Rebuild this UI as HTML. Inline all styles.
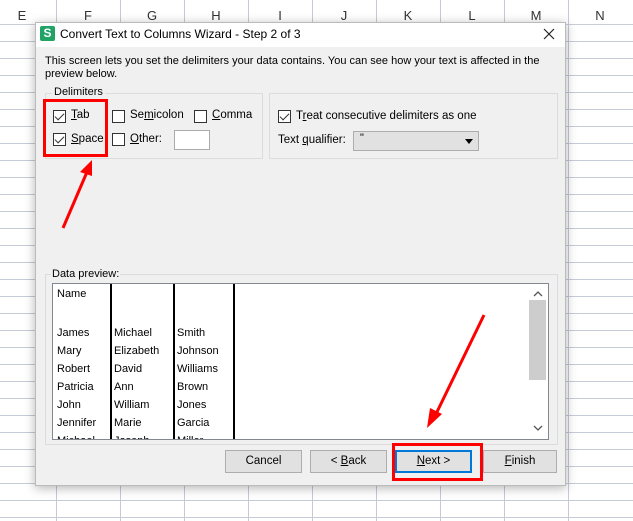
<!DOCTYPE html>
<html><head><style>
*{margin:0;padding:0;box-sizing:border-box}
body{width:633px;height:521px;overflow:hidden;position:relative;background:#fff;font-family:"Liberation Sans","DejaVu Sans",sans-serif;font-size:11.5px;color:#000}
.a{position:absolute}
.cb{position:absolute;width:13px;height:13px;border:1px solid #333;background:#fff}
.cb.on::after{content:"";position:absolute;left:3px;top:0px;width:4px;height:8px;border-right:1.5px solid #333;border-bottom:1.5px solid #333;transform:rotate(45deg)}
.btn{position:absolute;height:23px;background:#e1e1e1;border:1px solid #adadad;text-align:center;line-height:21px}
u{text-decoration:underline}
.grp{position:absolute;border:1px solid #dcdcdc}
.d{position:absolute;font-size:11px}
</style></head><body>
<svg class="a" style="left:0;top:0" width="633" height="521">
<rect x="0" y="0" width="633" height="24" fill="#fff"/>
<g stroke="#c8cdd8" stroke-width="1">
<line x1="0" y1="24.5" x2="633" y2="24.5"/>
</g>
<g stroke="#c6cbd8">
<line x1="56.5" y1="0" x2="56.5" y2="521"/><line x1="120.5" y1="0" x2="120.5" y2="521"/><line x1="184.5" y1="0" x2="184.5" y2="521"/><line x1="248.5" y1="0" x2="248.5" y2="521"/><line x1="312.5" y1="0" x2="312.5" y2="521"/><line x1="376.5" y1="0" x2="376.5" y2="521"/><line x1="440.5" y1="0" x2="440.5" y2="521"/><line x1="504.5" y1="0" x2="504.5" y2="521"/><line x1="568.5" y1="0" x2="568.5" y2="521"/>
</g>
<g stroke="#c6cbd8" id="rows"></g>
<g font-size="13" fill="#333" text-anchor="middle" font-family="Liberation Sans">
<text x="22" y="20">E</text><text x="88" y="20">F</text><text x="152" y="20">G</text><text x="216" y="20">H</text><text x="280" y="20">I</text><text x="344" y="20">J</text><text x="408" y="20">K</text><text x="472" y="20">L</text><text x="536" y="20">M</text><text x="600" y="20">N</text>
</g>
</svg>
<script>
var g=document.getElementById('rows'),s='';for(var y=41;y<521;y+=17)s+='<line x1="0" y1="'+(y+.5)+'" x2="633" y2="'+(y+.5)+'"/>';g.innerHTML=s;
</script>
<div class="a" style="left:35px;top:22px;width:531px;height:464px;background:#f0f0f0;border:1px solid #bbb;box-shadow:0 2px 10px rgba(0,0,0,.3)"></div>
<div class="a" style="left:36px;top:23px;width:529px;height:24px;background:#fff"></div>
<div class="a" style="left:40px;top:26px;width:15px;height:15px;background:#21a366;border-radius:2px;color:#fff;font-size:12px;font-weight:bold;text-align:center;line-height:15px">S</div>
<div class="a" style="left:60px;top:27px;font-size:12px">Convert Text to Columns Wizard - Step 2 of 3</div>
<svg class="a" style="left:543px;top:28px" width="12" height="12"><path d="M1 1L11 11M11 1L1 11" stroke="#222" stroke-width="1.2"/></svg>
<div class="a" style="left:45px;top:55px;width:510px;line-height:13px;font-size:11px">This screen lets you set the delimiters your data contains. You can see how your text is affected in the preview below.</div>
<div class="grp" style="left:45px;top:93px;width:218px;height:66px"></div>
<div class="a" style="left:52px;top:86px;padding:0 2px;background:#f0f0f0;font-size:11px">Delimiters</div>
<div class="cb on" style="left:53px;top:110px"></div><div class="a" style="left:71px;top:109px"><u>T</u>ab</div>
<div class="cb on" style="left:53px;top:133px"></div><div class="a" style="left:71px;top:133px"><u>S</u>pace</div>
<div class="cb" style="left:112px;top:110px"></div><div class="a" style="left:130px;top:109px">Se<u>m</u>icolon</div>
<div class="cb" style="left:194px;top:110px"></div><div class="a" style="left:212px;top:109px"><u>C</u>omma</div>
<div class="cb" style="left:112px;top:133px"></div><div class="a" style="left:130px;top:133px"><u>O</u>ther:</div>
<div class="a" style="left:174px;top:130px;width:36px;height:20px;background:#fff;border:1px solid #aaa"></div>
<div class="grp" style="left:269px;top:93px;width:289px;height:66px"></div>
<div class="cb on" style="left:278px;top:110px"></div><div class="a" style="left:296px;top:110px">T<u>r</u>eat consecutive delimiters as one</div>
<div class="a" style="left:278px;top:134px">Text <u>q</u>ualifier:</div>
<div class="a" style="left:353px;top:131px;width:126px;height:20px;background:#e1e1e1;border:1px solid #adadad;padding-left:6px;font-size:11px">"</div>
<div class="a" style="left:465px;top:139px;width:0;height:0;border-left:4px solid transparent;border-right:4px solid transparent;border-top:5px solid #000"></div>
<div class="grp" style="left:45px;top:274px;width:513px;height:171px"></div>
<div class="a" style="left:51px;top:268px;padding:0 1px;background:#f0f0f0;font-size:11px">Data preview:</div>
<div class="a" style="left:52px;top:283px;width:497px;height:157px;background:#fff;border:1px solid #828790;overflow:hidden">
<div class="a" style="left:57px;top:0;width:1.5px;height:160px;background:#000"></div>
<div class="a" style="left:120px;top:0;width:1.5px;height:160px;background:#000"></div>
<div class="a" style="left:180px;top:0;width:1.5px;height:160px;background:#000"></div>
<div class="a" style="left:476px;top:16px;width:17px;height:80px;background:#cdcdcd"></div>
<svg class="a" style="left:480px;top:7px" width="10" height="6"><path d="M1 5L5 1L9 5" stroke="#555" fill="none" stroke-width="1.3"/></svg>
<svg class="a" style="left:480px;top:141px" width="10" height="6"><path d="M1 1L5 5L9 1" stroke="#555" fill="none" stroke-width="1.3"/></svg>
<div class="d" style="left:4px;top:4px">Name</div>
<div class="d" style="left:4px;top:40px;line-height:18px">James<br>Mary<br>Robert<br>Patricia<br>John<br>Jennifer<br>Michael</div>
<div class="d" style="left:61px;top:40px;line-height:18px">Michael<br>Elizabeth<br>David<br>Ann<br>William<br>Marie<br>Joseph</div>
<div class="d" style="left:124px;top:40px;line-height:18px">Smith<br>Johnson<br>Williams<br>Brown<br>Jones<br>Garcia<br>Miller</div>
</div>
<div class="btn" style="left:225px;top:450px;width:77px">Cancel</div>
<div class="btn" style="left:310px;top:450px;width:77px">&lt; <u>B</u>ack</div>
<div class="btn" style="left:395px;top:450px;width:77px;border:2px solid #0078d7;line-height:19px"><u>N</u>ext &gt;</div>
<div class="btn" style="left:483px;top:450px;width:74px"><u>F</u>inish</div>
<div class="a" style="left:43px;top:99px;width:65px;height:58px;border:3px solid #f00"></div>
<div class="a" style="left:392px;top:443px;width:91px;height:38px;border:3px solid #f00"></div>
<svg class="a" style="left:0;top:0" width="633" height="521">
<line x1="63" y1="228" x2="87" y2="172" stroke="#f00" stroke-width="3"/>
<polygon points="92,160 80,172 92,176" fill="#f00"/>
<line x1="484" y1="315" x2="436" y2="414" stroke="#f00" stroke-width="3"/>
<polygon points="427,428 430,408 442,414" fill="#f00"/>
</svg>
</body></html>
